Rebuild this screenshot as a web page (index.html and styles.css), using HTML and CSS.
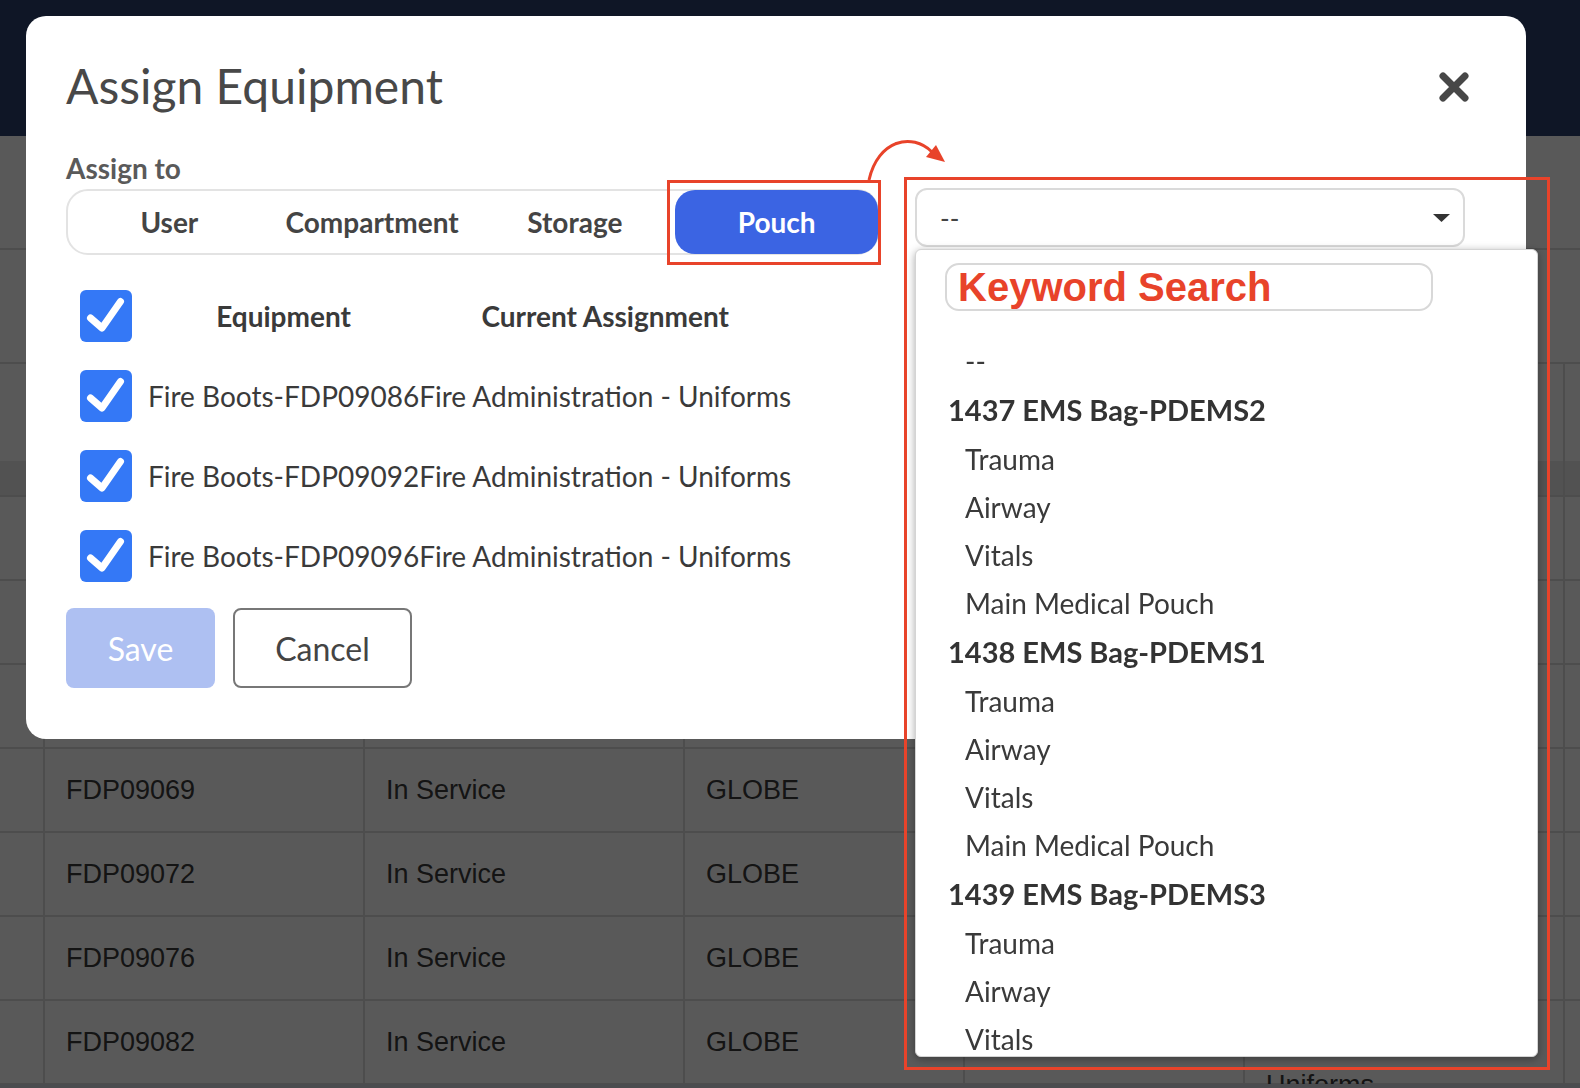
FILE: index.html
```html
<!DOCTYPE html>
<html lang="en">
  <head>
    <meta charset="utf-8">
    <link rel="stylesheet" href="styles.css">
    <title>Assign Equipment</title>
  </head>
  <body>
    <div class="page">
      <div class="topbar"></div>
      <div class="toolbar"></div>
      <div class="summary"></div>
      <div class="grid">
        <div class="row row-filter">
          <div class="cell"></div><div class="cell"></div><div class="cell"></div><div class="cell"></div>
          <div class="cell"></div><div class="cell"></div><div class="cell"></div>
        </div>
        <div class="row row-head">
          <div class="cell"></div><div class="cell"></div><div class="cell"></div><div class="cell"></div>
          <div class="cell"></div><div class="cell"></div><div class="cell"></div>
        </div>
        <div class="row">
          <div class="cell"></div><div class="cell"></div><div class="cell"></div><div class="cell"></div>
          <div class="cell"></div><div class="cell"></div><div class="cell"></div>
        </div>
        <div class="row">
          <div class="cell"></div><div class="cell"></div><div class="cell"></div><div class="cell"></div>
          <div class="cell"></div><div class="cell"></div><div class="cell"></div>
        </div>
        <div class="row">
          <div class="cell"></div><div class="cell"></div><div class="cell"></div><div class="cell"></div>
          <div class="cell"></div><div class="cell"></div><div class="cell"></div>
        </div>
        <div class="row">
          <div class="cell"></div>
          <div class="cell">FDP09069</div>
          <div class="cell">In Service</div>
          <div class="cell">GLOBE</div>
          <div class="cell"></div>
          <div class="cell"></div>
          <div class="cell"></div>
        </div>
        <div class="row">
          <div class="cell"></div>
          <div class="cell">FDP09072</div>
          <div class="cell">In Service</div>
          <div class="cell">GLOBE</div>
          <div class="cell"></div>
          <div class="cell"></div>
          <div class="cell"></div>
        </div>
        <div class="row">
          <div class="cell"></div>
          <div class="cell">FDP09076</div>
          <div class="cell">In Service</div>
          <div class="cell">GLOBE</div>
          <div class="cell"></div>
          <div class="cell"></div>
          <div class="cell"></div>
        </div>
        <div class="row">
          <div class="cell"></div>
          <div class="cell">FDP09082</div>
          <div class="cell">In Service</div>
          <div class="cell">GLOBE</div>
          <div class="cell"></div>
          <div class="cell spill">Uniforms</div>
          <div class="cell"></div>
        </div>
      </div>
      <div class="scrollbar"></div>
    </div>

    <div class="overlay"></div>

    <div class="modal">
      <div class="modal-head">
        <h1 class="modal-title">Assign Equipment</h1>
        <svg class="close" viewBox="0 0 32 32">
          <path d="M5 5 L27 27 M27 5 L5 27" stroke="#474747" stroke-width="7" stroke-linecap="round" />
        </svg>
      </div>

      <div class="modal-body">
        <div class="assign">
          <div class="field-label">Assign to</div>
          <div class="tabs">
            <div class="tab">User</div>
            <div class="tab">Compartment</div>
            <div class="tab">Storage</div>
            <div class="tab active">Pouch</div>
          </div>

          <table class="items">
            <tr>
              <td class="pick">
                <svg class="box" viewBox="0 0 52 52"><rect width="52" height="52" rx="6" fill="#3478f6" /><path d="M10.5 28 L22 38 L40.5 11.5" fill="none" stroke="#fff" stroke-width="7" stroke-linecap="round" stroke-linejoin="round" /></svg>
              </td>
              <th>Equipment</th>
              <th>Current Assignment</th>
            </tr>
            <tr>
              <td class="pick">
                <svg class="box" viewBox="0 0 52 52"><rect width="52" height="52" rx="6" fill="#3478f6" /><path d="M10.5 28 L22 38 L40.5 11.5" fill="none" stroke="#fff" stroke-width="7" stroke-linecap="round" stroke-linejoin="round" /></svg>
              </td>
              <td>Fire Boots-FDP09086</td>
              <td>Fire Administration - Uniforms</td>
            </tr>
            <tr>
              <td class="pick">
                <svg class="box" viewBox="0 0 52 52"><rect width="52" height="52" rx="6" fill="#3478f6" /><path d="M10.5 28 L22 38 L40.5 11.5" fill="none" stroke="#fff" stroke-width="7" stroke-linecap="round" stroke-linejoin="round" /></svg>
              </td>
              <td>Fire Boots-FDP09092</td>
              <td>Fire Administration - Uniforms</td>
            </tr>
            <tr>
              <td class="pick">
                <svg class="box" viewBox="0 0 52 52"><rect width="52" height="52" rx="6" fill="#3478f6" /><path d="M10.5 28 L22 38 L40.5 11.5" fill="none" stroke="#fff" stroke-width="7" stroke-linecap="round" stroke-linejoin="round" /></svg>
              </td>
              <td>Fire Boots-FDP09096</td>
              <td>Fire Administration - Uniforms</td>
            </tr>
          </table>

          <div class="actions">
            <button class="btn btn-save">Save</button>
            <button class="btn btn-cancel">Cancel</button>
          </div>
        </div>

        <div class="target">
          <div class="select">
            <span>--</span>
            <svg class="caret" viewBox="0 0 17 8"><polygon points="0,0 17,0 8.5,8" fill="#333" /></svg>
          </div>
          <div class="menu">
            <input class="search" type="text" placeholder="Keyword Search">
            <ul class="options">
              <li class="opt">--</li>
              <li class="group">1437 EMS Bag-PDEMS2</li>
              <li class="opt">Trauma</li>
              <li class="opt">Airway</li>
              <li class="opt">Vitals</li>
              <li class="opt">Main Medical Pouch</li>
              <li class="group">1438 EMS Bag-PDEMS1</li>
              <li class="opt">Trauma</li>
              <li class="opt">Airway</li>
              <li class="opt">Vitals</li>
              <li class="opt">Main Medical Pouch</li>
              <li class="group">1439 EMS Bag-PDEMS3</li>
              <li class="opt">Trauma</li>
              <li class="opt">Airway</li>
              <li class="opt">Vitals</li>
            </ul>
          </div>
        </div>
      </div>
    </div>

    <!-- annotation marks drawn over the screenshot -->
    <svg class="marks" viewBox="0 0 1580 1088" width="1580" height="1088">
      <rect x="668.5" y="181.5" width="211" height="82" />
      <rect x="905.5" y="178.5" width="643" height="890" />
      <path d="M869 180 C878 140 912 132 932 152" />
      <polygon points="936,145 945,162 926,157" />
    </svg>
  </body>
</html>
```

FILE: styles.css
```css
* {
  box-sizing: border-box;
}
html,
body {
  margin: 0;
  height: 100%;
}
body {
  overflow: hidden;
  background: #fff;
  font-family: "Liberation Sans", Arial, sans-serif;
}

/* page behind the modal */
.page {
  height: 1088px;
  overflow: hidden;
}
.topbar {
  height: 136px;
  background: #2b3f6d;
}
.toolbar,
.summary {
  height: 114px;
  border-bottom: 2px solid #dcdcdc;
}
.row {
  display: grid;
  grid-template-columns: 43px 320px 320px 280px 280px 320px 1fr;
  grid-template-rows: minmax(0, 1fr);
  height: 84px;
  border-bottom: 2px solid #dcdcdc;
}
.row-filter {
  height: 97px;
  border-bottom: none;
}
.row-head {
  height: 36px;
  background: #eaeaea;
}
.cell {
  display: flex;
  align-items: center;
  padding: 0 16px 0 21px;
  border-left: 2px solid #dcdcdc;
  font-size: 27px;
  color: #3a3a3a;
}
.cell:first-child {
  border-left: none;
}
.cell.spill {
  align-items: flex-start;
  padding-top: 64px;
  line-height: 40px;
}
.scrollbar {
  position: fixed;
  left: 0;
  right: 0;
  bottom: 0;
  height: 4px;
  background: #d6d9e2;
}
.overlay {
  position: fixed;
  inset: 0;
  background: rgba(0, 0, 0, 0.65);
}

/* modal */
.modal {
  position: fixed;
  left: 26px;
  top: 16px;
  width: 1500px;
  height: 723px;
  padding: 42px 40px 0;
  background: #fff;
  border-radius: 20px;
  font-family: Lato, "Open Sans", sans-serif;
  color: #3a3a3a;
}
.modal-head {
  display: flex;
  justify-content: space-between;
  align-items: center;
}
.modal-title {
  margin: 0;
  font-size: 48px;
  line-height: 55px;
  font-weight: 400;
  color: #484848;
}
.close {
  width: 32px;
  height: 32px;
  margin: 3px 16px 0 0;
}
.modal-body {
  display: flex;
  gap: 36px;
  margin-top: 40px;
}
.assign {
  width: 813px;
}
.field-label {
  margin-bottom: 5px;
  font-size: 28px;
  line-height: 31px;
  font-weight: 700;
  color: #5a5a5a;
}
.tabs {
  display: flex;
  height: 66px;
  border: 2px solid #e3e3e3;
  border-radius: 22px;
}
.tab {
  flex: 1;
  display: flex;
  align-items: center;
  justify-content: center;
  font-size: 28px;
  font-weight: 700;
  color: #444;
}
.tab.active {
  margin: -1px;
  background: #3b64e3;
  color: #fff;
  border-radius: 20px;
}

.items {
  margin-top: 21px;
  border-collapse: collapse;
}
.items td,
.items th {
  height: 80px;
  padding: 0;
  font-size: 28px;
  color: #3a3a3a;
}
.items th {
  font-weight: 700;
  text-align: center;
}
.items .pick {
  padding: 0 16px 0 14px;
}
.box {
  display: block;
  width: 52px;
  height: 52px;
}

.actions {
  display: flex;
  gap: 18px;
  margin-top: 12px;
}
.btn {
  height: 80px;
  border-radius: 8px;
  font-family: Lato, "Open Sans", sans-serif;
  font-size: 32px;
}
.btn-save {
  width: 149px;
  border: none;
  background: #aec0f2;
  color: #fff;
}
.btn-cancel {
  width: 179px;
  border: 2px solid #777;
  background: #fff;
  color: #444;
}

/* pouch picker */
.target {
  position: relative;
  width: 550px;
  padding-top: 35px;
}
.select {
  display: flex;
  align-items: center;
  justify-content: space-between;
  height: 59px;
  padding: 0 13px 0 23px;
  border: 2px solid #dadada;
  border-radius: 12px;
  font-size: 26px;
  color: #444;
}
.caret {
  width: 17px;
  height: 8px;
}
.menu {
  position: absolute;
  top: 96px;
  left: 0;
  width: 623px;
  height: 808px;
  padding-top: 13px;
  background: #fff;
  border: 1px solid #d4d4d4;
  border-radius: 6px;
  box-shadow: 0 2px 8px rgba(0, 0, 0, 0.35);
  overflow: hidden;
}
.search {
  display: block;
  width: 488px;
  height: 48px;
  margin-left: 29px;
  padding: 0 11px;
  border: 2px solid #d8d8d8;
  border-radius: 14px;
  font: 700 40px "Liberation Sans", Arial, sans-serif;
  color: #e8432a;
  outline: none;
}
.search::placeholder {
  color: #e8432a;
  opacity: 1;
}
.options {
  list-style: none;
  margin: 26px 0 0;
  padding: 0;
}
.opt {
  height: 48px;
  line-height: 48px;
  padding-left: 49px;
  font-size: 28px;
  color: #3a3a3a;
}
.group {
  height: 50px;
  line-height: 50px;
  padding-left: 32px;
  font-size: 29px;
  font-weight: 700;
  color: #333;
}

/* red annotation layer */
.marks {
  position: fixed;
  left: 0;
  top: 0;
  pointer-events: none;
}
.marks rect,
.marks path {
  fill: none;
  stroke: #e8432a;
  stroke-width: 3;
}
.marks polygon {
  fill: #e8432a;
}
```
